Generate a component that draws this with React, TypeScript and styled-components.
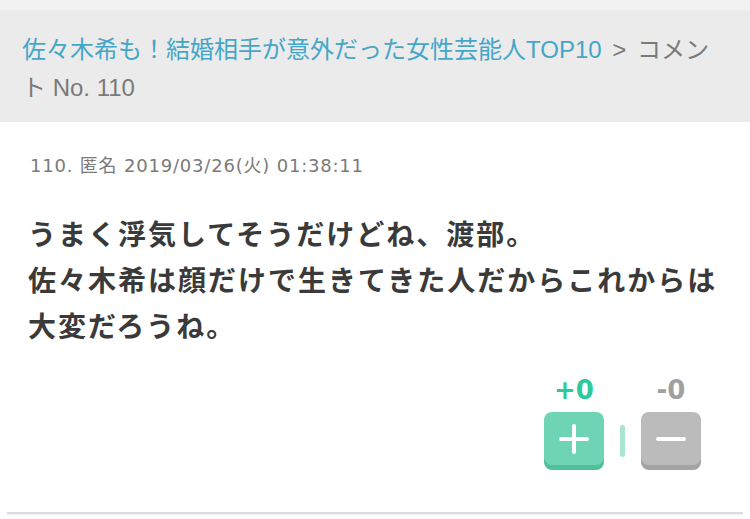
import React from "react";
import styled, { createGlobalStyle } from "styled-components";

const Global = createGlobalStyle`
  html, body { margin: 0; padding: 0; background: #fff; }
  body { font-family: "Noto Sans CJK JP", "Noto Sans", sans-serif; }
`;

const Page = styled.div`
  width: 750px;
  min-height: 519px;
  background: #fff;
`;

const Header = styled.div`
  background: #ebebeb;
  border-top: 10px solid #f2f2f2;
  padding: 21px 30px 15px 22px;
  font-size: 24px;
  line-height: 38px;
  color: #7a7a7a;
  font-family: "Liberation Sans", "Noto Sans CJK JP", sans-serif;
`;

const Crumb = styled.span`
  color: #45a6c8;
`;

const Arrow = styled.span`
  margin: 0 4px;
`;

const Card = styled.div`
  padding: 31px 28px 0 28px;
`;

const Meta = styled.div`
  font-size: 18px;
  letter-spacing: 0.8px;
  color: #7a7a7a;
  padding-left: 2px;
  line-height: 26px;
  font-family: "DejaVu Sans", "Noto Sans CJK JP", sans-serif;
`;

const Body = styled.div`
  margin-top: 31px;
  font-size: 28px;
  letter-spacing: 2px;
  font-weight: 700;
  line-height: 46px;
  color: #3a3a3a;
`;

const Votes = styled.div`
  display: flex;
  justify-content: flex-end;
  align-items: flex-end;
  gap: 16px;
  padding-right: 21px;
  margin-top: 28px;
`;

const VoteCol = styled.div`
  display: flex;
  flex-direction: column;
  align-items: center;
  gap: 8px;
`;

const Count = styled.div<{ $c: string }>`
  font-family: "DejaVu Sans", sans-serif;
  font-weight: 700;
  font-size: 26px;
  line-height: 28px;
  color: ${(p) => p.$c};
`;

const Btn = styled.button<{ $bg: string; $dark: string }>`
  width: 60px;
  height: 53px;
  margin-bottom: 5px;
  border: none;
  border-radius: 8px;
  background: ${(p) => p.$bg};
  box-shadow: 0 5px 0 ${(p) => p.$dark};
  display: flex;
  align-items: center;
  justify-content: center;
  padding: 0;
`;

const Sep = styled.div`
  width: 5px;
  height: 32px;
  border-radius: 3px;
  background: #a8e6d1;
  margin-bottom: 13px;
`;

const Rule = styled.div`
  margin: 42px 7px 0 7px;
  height: 2px;
  background: #dcdcdc;
  box-shadow: 0 1px 2px rgba(0, 0, 0, 0.08);
`;

export default function App() {
  return (
    <Page>
      <Global />
      <Header>
        <Crumb>佐々木希も！結婚相手が意外だった女性芸能人TOP10</Crumb>
        <Arrow> &gt; </Arrow>コメント No. 110
      </Header>
      <Card>
        <Meta>110. 匿名 2019/03/26(火) 01:38:11</Meta>
        <Body>
          うまく浮気してそうだけどね、渡部。
          <br />
          佐々木希は顔だけで生きてきた人だからこれからは
          <br />
          大変だろうね。
        </Body>
        <Votes>
          <VoteCol>
            <Count $c="#2ec99a">+0</Count>
            <Btn $bg="#6fd4b5" $dark="#4fbf9c">
              <svg width="30" height="30" viewBox="0 0 30 30">
                <path d="M15 2v26M2 15h26" stroke="#fff" strokeWidth="4" strokeLinecap="round" />
              </svg>
            </Btn>
          </VoteCol>
          <Sep />
          <VoteCol>
            <Count $c="#a0a0a0">-0</Count>
            <Btn $bg="#bbbbbb" $dark="#a3a3a3">
              <svg width="30" height="30" viewBox="0 0 30 30">
                <path d="M2 15h26" stroke="#fff" strokeWidth="4" strokeLinecap="round" />
              </svg>
            </Btn>
          </VoteCol>
        </Votes>
      </Card>
      <Rule />
    </Page>
  );
}
